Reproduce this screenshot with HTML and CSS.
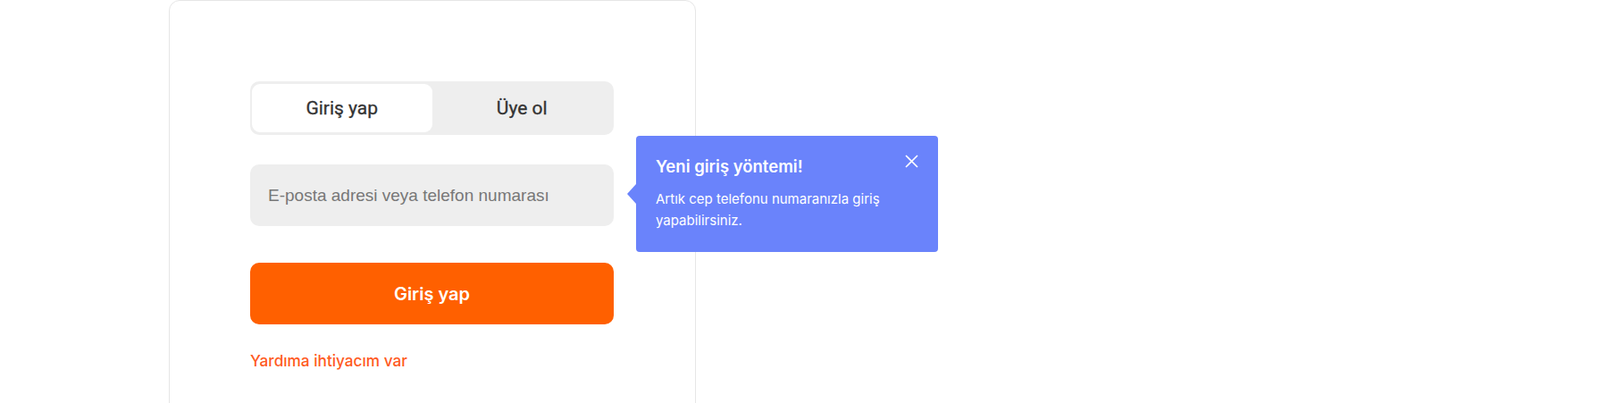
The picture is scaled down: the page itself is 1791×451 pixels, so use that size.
FILE: index.html
```html
<!DOCTYPE html>
<html lang="tr">
<head>
<meta charset="utf-8">
<title>Giriş yap</title>
<link rel="stylesheet" href="styles.css">
</head>
<body>
<div class="page">
  <div class="card">
    <div class="tabs">
      <div class="tab tab-active">Giriş yap</div>
      <div class="tab">Üye ol</div>
    </div>
    <div class="field">
      <input class="input" type="text" placeholder="E-posta adresi veya telefon numarası">
      <div class="tip">
        <span class="tip-arrow"></span>
        <div class="tip-head">
          <div class="tip-title">Yeni giriş yöntemi!</div>
          <svg class="tip-close" width="15" height="15" viewBox="0 0 15 15"><path d="M1 1L14 14M14 1L1 14" stroke="#fff" stroke-width="1.6" fill="none"/></svg>
        </div>
        <div class="tip-text">Artık cep telefonu numaranızla giriş yapabilirsiniz.</div>
      </div>
    </div>
    <button class="btn">Giriş yap</button>
    <a class="help" href="#">Yardıma ihtiyacım var</a>
  </div>
</div>
</body>
</html>
```

FILE: styles.css
```css
html, body {
  margin: 0;
  padding: 0;
  background: #ffffff;
  overflow: hidden;
}
.page {
  padding-left: 189px;
  height: 451px;
}
.card {
  width: 407px;
  padding: 90px 91px 0 90px;
  height: 600px;
  border: 1px solid #e6e6e6;
  border-radius: 12px;
  background: #fff;
  display: flex;
  flex-direction: column;
}
.tabs {
  display: flex;
  height: 60px;
  box-sizing: border-box;
  padding: 3px 2px;
  background: #eeeeee;
  border-radius: 10px;
}
.tab {
  flex: 1;
  display: flex;
  align-items: center;
  justify-content: center;
  font-family: Roboto, "Noto Sans", sans-serif;
  font-weight: 400;
  font-size: 21px;
  color: #333333;
  border-radius: 9px;
  -webkit-text-stroke: 0.3px #333333;
}
.tab-active {
  background: #ffffff;
}
.field {
  position: relative;
  margin-top: 33px;
}
.input {
  display: block;
  width: 100%;
  height: 69px;
  box-sizing: border-box;
  border: none;
  outline: none;
  background: #eeeeee;
  border-radius: 10px;
  padding: 0 20px;
  font-family: "Liberation Sans", Arial, sans-serif;
  font-size: 19px;
  color: #333;
}
.input::placeholder {
  color: #777777;
}
.tip {
  position: absolute;
  left: calc(100% + 25px);
  top: -32px;
  width: 338px;
  height: 130px;
  box-sizing: border-box;
  padding: 21px 22px 0 22px;
  background: #6a83fb;
  border-radius: 4px;
  color: #ffffff;
  font-family: Inter, "Noto Sans", sans-serif;
}
.tip-arrow {
  position: absolute;
  left: -10px;
  top: 54px;
  width: 0;
  height: 0;
  border-top: 11px solid transparent;
  border-bottom: 11px solid transparent;
  border-right: 10px solid #6a83fb;
}
.tip-head {
  display: flex;
  justify-content: space-between;
  align-items: flex-start;
}
.tip-title {
  font-size: 18.5px;
  font-weight: 600;
  line-height: 26px;
}
.tip-close {
  margin-top: 0;
  display: block;
}
.tip-text {
  margin-top: 12px;
  font-size: 15px;
  line-height: 24px;
  width: 290px;
}
.btn {
  margin-top: 41px;
  height: 69px;
  width: 100%;
  border: none;
  border-radius: 10px;
  background: #ff6000;
  color: #ffffff;
  font-family: Inter, "Noto Sans", sans-serif;
  font-weight: 600;
  font-size: 20px;
  cursor: pointer;
}
.help {
  margin-top: 30px;
  align-self: flex-start;
  font-family: Inter, "Noto Sans", sans-serif;
  font-weight: 500;
  font-size: 17.2px;
  line-height: 22px;
  color: #ff5a1e;
  text-decoration: none;
}
```
